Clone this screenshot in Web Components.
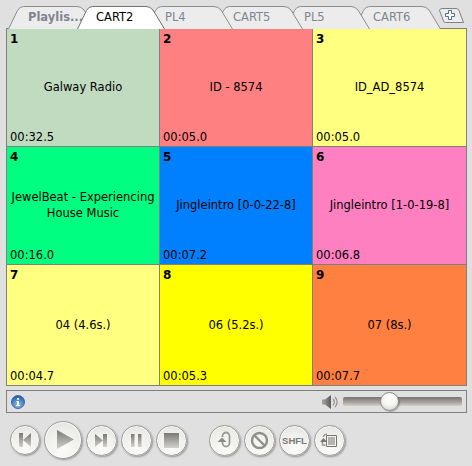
<!DOCTYPE html>
<html>
<head>
<meta charset="utf-8">
<style>
    html, body { margin: 0; padding: 0; width: 472px; height: 466px; overflow: hidden; background: #e0e0e0; }
    body { font-family: "DejaVu Sans", sans-serif; }
</style>
</head>
<body>
<svg style="display:block;width:0;height:0">
    <defs>
        <linearGradient id="g" x1="0" y1="0" x2="0" y2="1">
            <stop offset="0" stop-color="#7b7975"/>
            <stop offset="1" stop-color="#d2d1ce"/>
        </linearGradient>
    </defs>
</svg>
<player-panel>
    <tab-strip slot="tabs">
        <cart-tab w="88" adv="69" pad="20" bold>Playlis...</cart-tab>
        <cart-tab w="88" adv="69" active>CART2</cart-tab>
        <cart-tab w="87" adv="68">PL4</cart-tab>
        <cart-tab w="89" adv="71">CART5</cart-tab>
        <cart-tab w="85" adv="69">PL5</cart-tab>
        <cart-tab w="87" adv="85">CART6</cart-tab>
        <add-tab></add-tab>
    </tab-strip>
    <cart-grid slot="grid">
        <cart-cell num="1" time="00:32.5" style="--bg:#c1dbc1">Galway Radio</cart-cell>
        <cart-cell num="2" time="00:05.0" style="--bg:#ff8080">ID - 8574</cart-cell>
        <cart-cell num="3" time="00:05.0" style="--bg:#ffff80">ID_AD_8574</cart-cell>
        <cart-cell num="4" time="00:16.0" style="--bg:#00ff80">JewelBeat - Experiencing House Music</cart-cell>
        <cart-cell num="5" time="00:07.2" style="--bg:#0080ff">Jingleintro [0-0-22-8]</cart-cell>
        <cart-cell num="6" time="00:06.8" style="--bg:#ff80c0">Jingleintro [1-0-19-8]</cart-cell>
        <cart-cell num="7" time="00:04.7" style="--bg:#ffff80">04 (4.6s.)</cart-cell>
        <cart-cell num="8" time="00:05.3" style="--bg:#ffff00">06 (5.2s.)</cart-cell>
        <cart-cell num="9" time="00:07.7" style="--bg:#ff8040">07 (8s.)</cart-cell>
    </cart-grid>
    <status-bar slot="status"></status-bar>
    <transport-bar slot="transport">
        <round-button size="30"><svg viewBox="0 0 30 30"><path d="M9 8h4v14h-4zM21 8v14l-8-7z" fill="url(#g)"/></svg></round-button>
        <round-button size="38"><svg viewBox="0 0 38 38"><path d="M13 9l17 9.500-17 9.500z" fill="url(#g)"/></svg></round-button>
        <round-button size="31"><svg viewBox="0 0 31 31"><path d="M9 9l8 6.500-8 6.500zM17 9h4v13h-4z" fill="url(#g)"/></svg></round-button>
        <round-button size="31"><svg viewBox="0 0 31 31"><path d="M10 9h3.500v13h-3.500zM17 9h3.500v13h-3.500z" fill="url(#g)"/></svg></round-button>
        <round-button size="31"><svg viewBox="0 0 31 31"><path d="M8 8h15v15h-15z" fill="url(#g)"/></svg></round-button>
        <span class="sep"></span>
        <round-button size="31"><svg viewBox="0 0 31 31"><path d="M13.500 12v-1a3.500 3.500 0 0 1 7 0v7a3.500 3.500 0 0 1-7 0v-1" fill="none" stroke="#9a9894" stroke-width="1.800"/><path d="M8.500 17l4.500-4.500 4.500 4.500z" fill="#8d8b87"/></svg></round-button>
        <round-button size="31"><svg viewBox="0 0 31 31"><circle cx="15.500" cy="15.500" r="7.500" fill="none" stroke="#918f8b" stroke-width="2.400"/><path d="M10.500 10.500l10 10" stroke="#918f8b" stroke-width="2.400"/></svg></round-button>
        <round-button size="31"><span class="shfl">SHFL</span></round-button>
        <round-button size="31"><svg viewBox="0 0 31 31"><path d="M12.500 10.500h10v11h-10z" fill="#f4f4f2" stroke="#77746f"/><path d="M14 13h7M14 15h7M14 17h7M14 19h7" stroke="#77746f"/><path d="M6 17l3.500-4 3.500 4z" fill="#77746f"/><path d="M8.500 17v3h3M9 12a5 5 0 0 1 4-3" fill="none" stroke="#9a9894" stroke-width="1.500"/></svg></round-button>
    </transport-bar>
</player-panel>

<script>
    class PlayerPanel extends HTMLElement {
        constructor() {
            super()
            this.attachShadow({ mode: "open" })
            this.shadowRoot.innerHTML = `
                <style>
                    :host { display: flex; flex-direction: column; width: 472px; height: 466px; padding: 6px 5px 0 6px; box-sizing: border-box; }
                </style>
                <slot name="tabs"></slot>
                <slot name="grid"></slot>
                <slot name="status"></slot>
                <slot name="transport"></slot>
            `
        }
    }

    class TabStrip extends HTMLElement {
        constructor() {
            super()
            this.attachShadow({ mode: "open" })
            this.shadowRoot.innerHTML = `
                <style>
                    :host { display: flex; height: 23px; padding-left: 2px; position: relative; z-index: 1; margin-bottom: -1px; }
                </style>
                <slot></slot>
            `
        }
    }

    class CartTab extends HTMLElement {
        constructor() {
            super()
            this.attachShadow({ mode: "open" })
        }

        connectedCallback() {
            const w = Number(this.getAttribute("w"))
            const adv = Number(this.getAttribute("adv"))
            const pad = this.getAttribute("pad") ?? 19
            const active = this.hasAttribute("active")
            const bold = this.hasAttribute("bold")
            const order = [...this.parentNode.children].indexOf(this)
            const fill = active ? "#ffffff" : "#ececec"
            const stroke = active ? "#6f6f6f" : "#8c8c8c"
            const d = `M0.500 23 L9.500 4.500 Q11.500 .5 15.500 .5 L${w - 19} .5 Q${w - 15} .5 ${w - 12} 4 L${w - .5} 23`
            this.shadowRoot.innerHTML = `
                <style>
                    :host {
                        display: block; position: relative; width: ${w}px; height: 23px; margin-right: ${adv - w}px;
                        z-index: ${active ? 20 : 10 - order};
                        font-size: 11.5px; color: ${active ? "#000" : "#7f8490"};
                        font-weight: ${bold ? "bold" : "normal"};
                    }
                    svg { position: absolute; left: 0; top: 0; }
                    span { position: relative; display: block; padding: 3px 0 0 ${pad}px; line-height: 16px; white-space: nowrap; }
                </style>
                <svg width="${w}" height="23"><path d="${d}" fill="${fill}" stroke="${stroke}"/></svg>
                <span><slot></slot></span>
            `
        }
    }

    class AddTab extends HTMLElement {
        constructor() {
            super()
            this.attachShadow({ mode: "open" })
            this.shadowRoot.innerHTML = `
                <style>
                    :host { display: block; width: 26px; height: 16px; margin: 2px 0 0 0; }
                </style>
                <svg width="26" height="16">
                    <path d="M.5 2.500 Q1 .5 3 .5 H17 Q19 .5 20 2.500 L24.500 14.500 H6.500 Q5 14.500 4.500 13z" fill="#ececec" stroke="#808080"/>
                    <path d="M9.500 2.500h3v3h3v3h-3v3h-3v-3h-3v-3h3z" fill="#fff" stroke="#4f6f96"/>
                </svg>
            `
        }
    }

    class CartGrid extends HTMLElement {
        constructor() {
            super()
            this.attachShadow({ mode: "open" })
            this.shadowRoot.innerHTML = `
                <style>
                    :host {
                        display: grid; width: 461px; height: 358px; box-sizing: border-box;
                        grid-template-columns: 152px 152px 153px; grid-template-rows: 117px 117px 120px;
                        gap: 1px; background: #7f7f7f; border: 1px solid #7f7f7f;
                    }
                </style>
                <slot></slot>
            `
        }
    }

    class CartCell extends HTMLElement {
        constructor() {
            super()
            this.attachShadow({ mode: "open" })
        }

        connectedCallback() {
            const num = this.getAttribute("num")
            const time = this.getAttribute("time")
            this.shadowRoot.innerHTML = `
                <style>
                    :host {
                        display: flex; flex-direction: column; background: var(--bg); color: #000;
                        font-size: 11.5px; padding: 3px 3px 2px 3px; box-sizing: border-box; min-width: 0;
                    }
                    #num { font-weight: bold; font-size: 12px; line-height: 14px; }
                    #title { flex: 1; display: flex; align-items: center; justify-content: center; text-align: center; line-height: 16px; padding-bottom: 2px; }
                    #time { line-height: 14px; }
                </style>
                <div id="num">${num}</div>
                <div id="title"><div><slot></slot></div></div>
                <div id="time">${time}</div>
            `
        }
    }

    class StatusBar extends HTMLElement {
        constructor() {
            super()
            this.attachShadow({ mode: "open" })
            this.shadowRoot.innerHTML = `
                <style>
                    :host {
                        display: flex; align-items: center; justify-content: space-between; box-sizing: border-box;
                        width: 461px; height: 23px; margin-top: 4px; border: 1px solid #808080; padding: 0 4px;
                    }
                    #vol { display: flex; align-items: center; gap: 5px; }
                    #track { position: relative; width: 119px; height: 9px; border-radius: 2px; background: linear-gradient(#77746f, #a8a6a2 60%, #d0cfcc); }
                    #thumb {
                        position: absolute; left: 37px; top: -5px; width: 19px; height: 19px; border-radius: 50%; box-sizing: border-box;
                        background: radial-gradient(circle at 50% 30%, #fff, #f4f4f2 50%, #c9c8c4); border: 1px solid #8d8b87;
                        box-shadow: 1px 1px 1px rgba(0,0,0,.25);
                    }
                    svg { display: block; }
                </style>
                <svg width="14" height="14" viewBox="0 0 14 14">
                    <defs><radialGradient id="b" cx=".5" cy=".75" r=".7"><stop offset="0" stop-color="#8fc0ee"/><stop offset="1" stop-color="#2a5ea8"/></radialGradient></defs>
                    <circle cx="7" cy="7" r="6.500" fill="url(#b)" stroke="#3a6aa8"/>
                    <path d="M6 3h2v1.800h-2zM5.500 6h2.500v4h1v1h-4v-1h1v-3h-.5z" fill="#fff"/>
                </svg>
                <div id="vol">
                    <svg width="16" height="14" viewBox="0 0 16 14">
                        <defs><linearGradient id="sp" x1="0" x2="1" y1="0" y2="0"><stop offset="0" stop-color="#a5a3a0"/><stop offset="1" stop-color="#5f5d5a"/></linearGradient></defs>
                        <path d="M0 4.500h3l6-4.500v14l-6-4.500h-3z" fill="url(#sp)"/>
                        <path d="M11 4a4 4 0 0 1 0 6M13 2a7 7 0 0 1 0 10" fill="none" stroke="#8a8886" stroke-width="1.100"/>
                    </svg>
                    <div id="track"><div id="thumb"></div></div>
                </div>
            `
        }
    }

    class TransportBar extends HTMLElement {
        constructor() {
            super()
            this.attachShadow({ mode: "open" })
            this.shadowRoot.innerHTML = `
                <style>
                    :host { display: flex; align-items: center; gap: 4px; padding: 8px 0 0 4px; }
                    ::slotted(.sep) { width: 14px; }
                </style>
                <slot></slot>
            `
        }
    }

    class RoundButton extends HTMLElement {
        constructor() {
            super()
            this.attachShadow({ mode: "open" })
        }

        connectedCallback() {
            const size = this.getAttribute("size")
            this.shadowRoot.innerHTML = `
                <style>
                    :host {
                        display: flex; align-items: center; justify-content: center; box-sizing: border-box;
                        width: ${size}px; height: ${size}px; border-radius: 50%; flex: none;
                        background: radial-gradient(circle at 50% 80%, #fbfbf9, #eeeeeb 60%, #dfdfdc);
                        border: 1px solid #9e9c98;
                        box-shadow: inset 0 0 0 1px #fbfbfa, 1px 1px 2px rgba(0,0,0,.35);
                    }
                    ::slotted(svg) { flex: none; width: ${size}px; height: ${size}px; margin: -1px; }
                    ::slotted(.shfl) { font: bold 9.5px "Liberation Sans", sans-serif; color: #7b7975; }
                </style>
                <slot></slot>
            `
        }
    }

    customElements.define("player-panel", PlayerPanel)
    customElements.define("tab-strip", TabStrip)
    customElements.define("cart-tab", CartTab)
    customElements.define("add-tab", AddTab)
    customElements.define("cart-grid", CartGrid)
    customElements.define("cart-cell", CartCell)
    customElements.define("status-bar", StatusBar)
    customElements.define("transport-bar", TransportBar)
    customElements.define("round-button", RoundButton)
</script>
</body>
</html>
